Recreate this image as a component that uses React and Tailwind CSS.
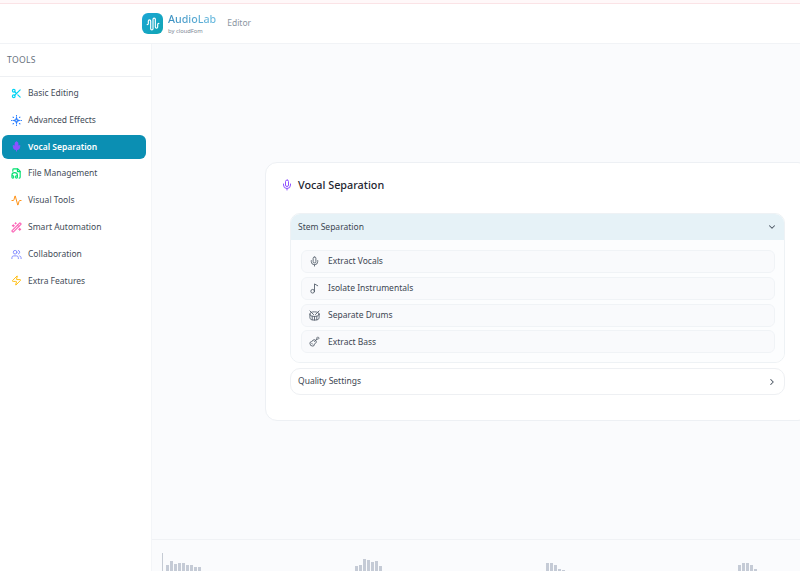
import React from "react";
import {
  Scissors, Mic, FileAudio, Activity, WandSparkles, Users, Zap,
  Music2, Drum, Guitar, ChevronDown, ChevronRight, AudioWaveform,
} from "lucide-react";

// star with dots round it, no icon in the package has this shape
function EffectsIcon({ size, className }) {
  return (
    <svg width={size} height={size} viewBox="0 0 24 24" fill="none" stroke="currentColor" strokeWidth="2.4" strokeLinecap="round" className={className}>
      <path d="M12 6l1.6 4.4L18 12l-4.4 1.6L12 18l-1.6-4.4L6 12l4.4-1.6z" />
      <path d="M12 1v1M12 22v1M1 12h1M22 12h1M4.5 4.5l1 1M18.5 18.5l1 1M19.5 4.5l-1 1M5.5 18.5l-1 1" />
    </svg>
  );
}

const tools = [
  { label: "Basic Editing", icon: Scissors, color: "text-cyan-400", stroke: 2.5 },
  { label: "Advanced Effects", icon: EffectsIcon, color: "text-blue-500" },
  { label: "Vocal Separation", icon: Mic, color: "text-violet-500 fill-violet-500", active: true },
  { label: "File Management", icon: FileAudio, color: "text-green-400", stroke: 2.5 },
  { label: "Visual Tools", icon: Activity, color: "text-orange-400" },
  { label: "Smart Automation", icon: WandSparkles, color: "text-pink-400", stroke: 2.5 },
  { label: "Collaboration", icon: Users, color: "text-indigo-400" },
  { label: "Extra Features", icon: Zap, color: "text-amber-400" },
];

const stems = [
  { label: "Extract Vocals", icon: Mic },
  { label: "Isolate Instrumentals", icon: Music2 },
  { label: "Separate Drums", icon: Drum },
  { label: "Extract Bass", icon: Guitar },
];

const waves = [
  { bars: [6, 10, 7, 8, 8, 6, 6, 4, 4], first: true },
  { bars: [5, 6, 12, 11, 9, 10, 5] },
  { bars: [8, 8, 6, 2, 1] },
  { bars: [6, 8, 8, 6, 2] },
];

function App() {
  return (
    <div className="flex flex-col h-[571px] w-[800px] overflow-hidden bg-white font-['Noto_Sans',sans-serif]">
      <div className="h-[4px] border-b border-[#fbe3e6] bg-[#fff8f9]" />
      <header className="flex items-center h-[40px] pl-[142px] bg-white border-b border-[#f1f3f6]">
        <div className="flex items-center justify-center w-[21px] h-[21px] rounded-md bg-gradient-to-br from-[#1ca6d6] to-[#10a5b3]">
          <AudioWaveform size={14} className="text-white" />
        </div>
        <div className="ml-[5px] flex flex-col mt-[2px]">
          <span className="text-[10.7px] leading-[13px] font-medium bg-gradient-to-r from-[#3a8fc0] to-[#6cbce0] bg-clip-text text-transparent">AudioLab</span>
          <span className="text-[5.8px] leading-[10px] text-[#7c8794]">by cloudFom</span>
        </div>
        <span className="ml-[11px] text-[8.5px] text-[#8b95a1]">Editor</span>
      </header>

      <div className="flex flex-1 min-h-0">
        <aside className="flex flex-col w-[152px] shrink-0 bg-white border-r border-[#f3f5f8]">
          <div className="flex items-center h-[33px] px-[7px] border-b border-[#eef0f3] text-[8.6px] tracking-[0.3px] text-[#66707c]">
            TOOLS
          </div>
          <nav className="flex flex-col gap-[2.8px] pt-[4.4px] pl-[2px] pr-[5px]">
            {tools.map((t) => (
              <div
                key={t.label}
                className={
                  t.active
                    ? "flex items-center gap-[6px] h-[24px] pl-[9px] rounded-md bg-[#0b8fb3] text-white font-semibold"
                    : "flex items-center gap-[6px] h-[24px] pl-[9px] rounded-md text-[#434c58]"
                }
              >
                <t.icon size={11} strokeWidth={t.stroke} className={t.color} />
                <span className="text-[8.5px]">{t.label}</span>
              </div>
            ))}
          </nav>
        </aside>

        <div className="flex flex-col flex-1 min-w-0 bg-[#fafbfd]">
          <main className="flex-1 min-h-0 pl-[113px] pt-[118px]">
            <section className="w-[545px] h-[259px] px-[15px] pt-[13px] bg-white border border-[#edf0f4] rounded-xl">
              <div className="flex items-center gap-[5px] h-[18px]">
                <Mic size={12} className="text-violet-500" />
                <h2 className="text-[10.8px] font-medium text-[#1e2530]">Vocal Separation</h2>
              </div>
              <div className="mt-[19px] mx-[9px] border border-[#eef2f5] rounded-[10px] overflow-hidden">
                <div className="flex items-center justify-between h-[26px] px-[7px] bg-[#e6f2f7]">
                  <span className="text-[8.5px] text-[#3d4652]">Stem Separation</span>
                  <ChevronDown size={10} strokeWidth={2.5} className="text-[#4a5461]" />
                </div>
                <div className="flex flex-col gap-[3.8px] pl-[10px] pr-[9px] pt-[10px] pb-[9px] bg-[#fcfdfe]">
                  {stems.map((s) => (
                    <div key={s.label} className="flex items-center gap-[8px] h-[23px] pl-[7px] bg-[#f9fafc] border border-[#f0f3f6] rounded-md">
                      <s.icon size={11} className="text-[#5a6470]" />
                      <span className="text-[8.5px] text-[#3d4652]">{s.label}</span>
                    </div>
                  ))}
                </div>
              </div>
              <div className="mt-[4.5px] mx-[9px] flex items-center justify-between h-[27.5px] px-[7px] bg-white border border-[#eef0f3] rounded-[10px]">
                <span className="text-[8.5px] text-[#3d4652]">Quality Settings</span>
                <ChevronRight size={10} strokeWidth={2.5} className="text-[#4a5461]" />
              </div>
            </section>
          </main>

          <div className="flex h-[32px] shrink-0 pl-[10px] pt-[13px] border-t border-[#f0f2f5]">
            {waves.map((w, i) => (
              <div key={i} className={w.first ? "w-[191.5px] shrink-0 flex items-end gap-[1px] pl-[3px] border-l border-[#c5cbd4]" : "w-[191.5px] shrink-0 flex items-end gap-[1px] pl-[1px]"}>
                {w.bars.map((h, j) => (
                  <div key={j} className="w-[3px] shrink-0 bg-[#c5cbd6]" style={{ height: h }} />
                ))}
              </div>
            ))}
          </div>
        </div>
      </div>
    </div>
  );
}

export default App;
